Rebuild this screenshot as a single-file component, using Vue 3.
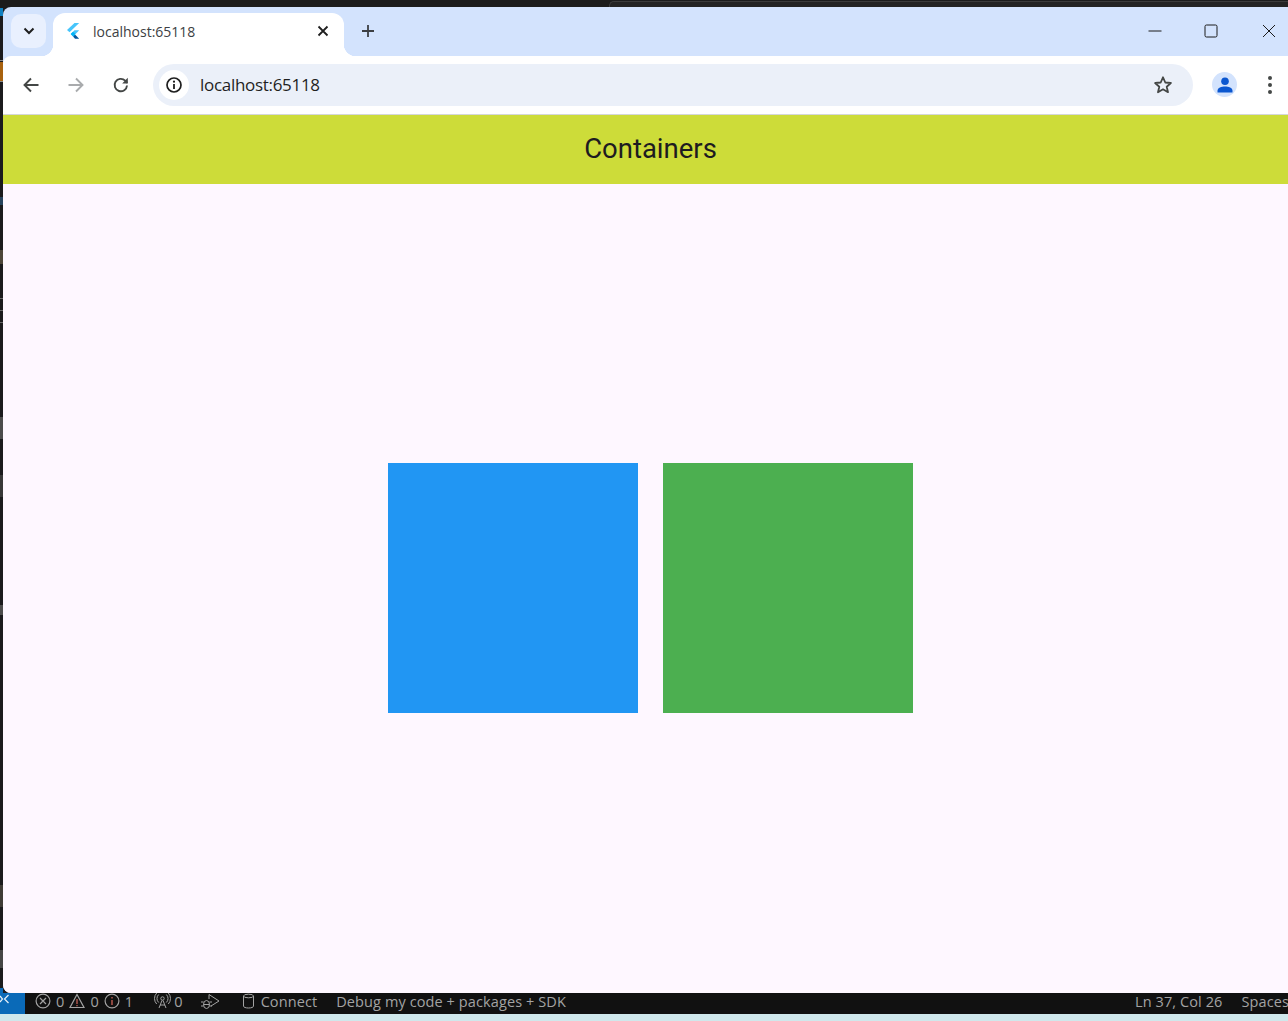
<template>
  <div class="screen">
    <div class="top-strip"><div class="behind-window"></div></div>
    <span
      v-for="mark in edgeMarks"
      :key="mark.y"
      class="edge-mark"
      :style="{ top: mark.y + 'px', height: mark.h + 'px', background: mark.c }"
    ></span>
    <div class="browser">
      <div class="tab-strip">
        <button class="tab-search" aria-label="Search tabs">
          <svg width="12" height="8" viewBox="0 0 12 8"><path d="M1.500 1.500 6 6l4.500-4.500" fill="none" stroke="#1f1f1f" stroke-width="2" /></svg>
        </button>
        <div class="tab">
          <svg class="favicon" width="14" height="16" viewBox="0 0 14 16">
            <path d="M8.500 0h4.700L3.500 9.300 1 7z" fill="#47c5fb" />
            <path d="M13.200 7.300H8.500L4.700 11l2.400 2.400z" fill="#47c5fb" />
            <path d="M7.100 13.400 9 15.700h4.200l-4.200-4.300z" fill="#00569e" />
            <path d="M4.700 11l2.300-2.300 2.400 2.300-2.300 2.400z" fill="#00b5f8" />
          </svg>
          <span class="tab-title">localhost:65118</span>
          <svg class="tab-close" width="12" height="12" viewBox="0 0 12 12"><path d="M1.500 1.500l9 9M10.500 1.500l-9 9" stroke="#1f1f1f" stroke-width="1.800" /></svg>
        </div>
        <svg class="new-tab" width="14" height="14" viewBox="0 0 14 14"><path d="M7 1v12M1 7h12" stroke="#3c3f43" stroke-width="1.800" /></svg>
        <div class="win-controls">
          <svg width="14" height="14" viewBox="0 0 14 14"><path d="M.5 7h13" stroke="#1b1b1b" stroke-width="1" /></svg>
          <svg width="14" height="14" viewBox="0 0 14 14"><rect x="1" y="1" width="12" height="12" rx="1.500" fill="none" stroke="#1b1b1b" stroke-width="1" /></svg>
          <svg class="win-close" width="14" height="14" viewBox="0 0 14 14"><path d="M1 1l12 12M13 1 1 13" stroke="#1b1b1b" stroke-width="1" /></svg>
        </div>
      </div>

      <div class="toolbar">
        <svg class="nav-icon" width="18" height="18" viewBox="0 0 18 18"><path d="M16.500 9H2.500M9 2.500 2.500 9 9 15.500" fill="none" stroke="#444746" stroke-width="1.900" /></svg>
        <svg class="nav-icon" width="18" height="18" viewBox="0 0 18 18"><path d="M1.500 9h14M9 2.500 15.500 9 9 15.500" fill="none" stroke="#a9abad" stroke-width="1.900" /></svg>
        <svg class="nav-icon" width="18" height="18" viewBox="0 0 18 18"><path d="M15 9.500A6.200 6.200 0 1 1 13.200 4.700L15.200 6.800" fill="none" stroke="#444746" stroke-width="1.900" /><path d="M15.800 1.800v5.600h-5.600z" fill="#444746" /></svg>
        <div class="omnibox">
          <span class="site-info">
            <svg width="18" height="18" viewBox="0 0 18 18"><circle cx="9" cy="9" r="7" fill="none" stroke="#1f1f1f" stroke-width="1.700" /><path d="M9 8v5" stroke="#1f1f1f" stroke-width="1.800" /><circle cx="9" cy="5.700" r="1.100" fill="#1f1f1f" /></svg>
          </span>
          <span class="url">localhost:65118</span>
          <svg class="star" width="20" height="20" viewBox="0 0 20 20"><path d="M10 2.300l2.300 5.200 5.600.5-4.200 3.700 1.300 5.500L10 14.300l-5 2.900 1.300-5.500L2.100 8l5.600-.5z" fill="none" stroke="#444746" stroke-width="1.800" stroke-linejoin="round" /></svg>
        </div>
        <span class="avatar">
          <svg width="16" height="16" viewBox="0 0 16 16"><circle cx="8" cy="4.300" r="3.800" fill="#0b57d0" /><path d="M.5 15.500v-1.800C.5 11 4.500 9.600 8 9.600s7.500 1.400 7.500 4.100v1.800z" fill="#0b57d0" /></svg>
        </span>
        <span class="menu-dots"><i></i><i></i><i></i></span>
      </div>

      <main class="page">
        <header class="app-bar">Containers</header>
        <div class="page-body">
          <div class="box box-blue"></div>
          <div class="box box-green"></div>
        </div>
      </main>
    </div>

    <footer class="status-bar">
      <span class="remote">
        <svg width="10" height="10" viewBox="0 0 10 10"><path d="M8.500 1 4.500 5l4 4M0 2l2.500 3L0 8" fill="none" stroke="#e8f1f8" stroke-width="1.200" /></svg>
      </span>
      <div class="status-item problems">
        <svg width="16" height="16" viewBox="0 0 16 16"><circle cx="8" cy="8" r="6.900" fill="none" stroke="#a3a3a3" stroke-width="1.200" /><path d="M5 5l6 6M11 5l-6 6" stroke="#a3a3a3" stroke-width="1.200" /></svg>
        <span>0</span>
        <svg width="16" height="16" viewBox="0 0 16 16"><path d="M8 1.500 15 14.500H1z" fill="none" stroke="#a3a3a3" stroke-width="1.200" /><path d="M8 6v5" stroke="#b65a4f" stroke-width="1.400" /><path d="M8 12v1.300" stroke="#b65a4f" stroke-width="1.400" /></svg>
        <span>0</span>
        <svg width="16" height="16" viewBox="0 0 16 16"><circle cx="8" cy="8" r="6.900" fill="none" stroke="#a3a3a3" stroke-width="1.200" /><path d="M8 7v5" stroke="#b65a4f" stroke-width="1.500" /><path d="M8 4v1.500" stroke="#b65a4f" stroke-width="1.500" /></svg>
        <span>1</span>
      </div>
      <div class="status-item ports">
        <svg width="17" height="16" viewBox="0 0 17 16"><circle cx="8.500" cy="5.500" r="1.700" fill="none" stroke="#a3a3a3" /><path d="M8 7.500 5 15M9 7.500l3 7.500M6 12h5M4.700 9.500a5.500 5.500 0 0 1 0-8M12.300 1.500a5.500 5.500 0 0 1 0 8M2.700 11a8 8 0 0 1 0-11M14.300 0a8 8 0 0 1 0 11" fill="none" stroke="#a3a3a3" /></svg>
        <span>0</span>
      </div>
      <div class="status-item run">
        <svg width="19" height="17" viewBox="0 0 19 17"><path d="M8 1.500 18 8l-8 5M8 1.500V6" fill="none" stroke="#a3a3a3" /><ellipse cx="5.500" cy="11.500" rx="3" ry="4" fill="none" stroke="#a3a3a3" /><path d="M0 9h2.500M0 13h2.500M8.500 9H11M8.500 13H11M2.500 11.500h6" stroke="#a3a3a3" /></svg>
      </div>
      <div class="status-item connect">
        <svg width="13" height="16" viewBox="0 0 13 16"><ellipse cx="6.500" cy="3" rx="5" ry="1.800" fill="none" stroke="#a3a3a3" /><path d="M1.500 3v10.200c0 1 2.200 1.800 5 1.800s5-.8 5-1.800V3" fill="none" stroke="#a3a3a3" /></svg>
        <span>Connect</span>
      </div>
      <span class="status-item debug">Debug my code + packages + SDK</span>
      <div class="status-item status-right">
        <span>Ln 37, Col 26</span>
        <span>Spaces</span>
      </div>
    </footer>
    <div class="desktop-strip"></div>
  </div>
</template>

<script setup>
// bits of the desktop that peek out left of the browser window
const edgeMarks = [
  { y: 8, h: 8, c: '#0f7fbf' },
  { y: 60, h: 1, c: '#8a8a8a' },
  { y: 62, h: 19, c: '#a8620f' },
  { y: 81, h: 1, c: '#8a8a8a' },
  { y: 197, h: 8, c: '#27435c' },
  { y: 250, h: 14, c: '#4d4639' },
  { y: 298, h: 1, c: '#666' },
  { y: 310, h: 1, c: '#666' },
  { y: 322, h: 1, c: '#666' },
  { y: 417, h: 22, c: '#4c4c4c' },
  { y: 475, h: 22, c: '#383838' },
  { y: 605, h: 10, c: '#4c4c4c' },
  { y: 885, h: 22, c: '#3f3c36' },
  { y: 950, h: 18, c: '#464646' },
  { y: 988, h: 5, c: '#0a6ab8' }
]
</script>

<style>
html,
body {
  margin: 0;
  overflow: hidden;
}
</style>

<style scoped>
.screen {
  position: relative;
  display: flex;
  flex-direction: column;
  width: 1288px;
  height: 1021px;
  overflow: hidden;
  background: #1b1b1d;
}

.top-strip {
  display: flex;
  flex: none;
  height: 7px;
  box-sizing: border-box;
  padding: 1px 0 0 609px;
  background: #1c1c1c;
}

.behind-window {
  flex: 1;
  border: solid #3b3b3b;
  border-width: 1px 0 0 1px;
  border-top-left-radius: 5px;
  background: #232323;
}

.edge-mark {
  position: absolute;
  left: 0;
  width: 3px;
}

.browser {
  position: relative;
  display: flex;
  flex-direction: column;
  flex: none;
  width: 1295px;
  height: 986px;
  margin-left: 3px;
  overflow: hidden;
  border-radius: 8px 0 0 8px;
  background: #d3e3fd;
}

.tab-strip {
  display: flex;
  align-items: flex-end;
  flex: none;
  height: 49px;
  box-sizing: border-box;
  padding-left: 8px;
}

.tab-search {
  display: flex;
  align-items: center;
  justify-content: center;
  align-self: flex-start;
  width: 35px;
  height: 34px;
  margin-top: 7px;
  padding: 0;
  border: 0;
  border-radius: 10px;
  background: #e9f0fe;
}

.tab {
  position: relative;
  display: flex;
  align-items: center;
  width: 291px;
  height: 43px;
  margin-left: 7px;
  padding: 0 15px 7px 13px;
  box-sizing: border-box;
  border-radius: 12px 12px 0 0;
  background: #fff;
}

.tab::before,
.tab::after {
  content: "";
  position: absolute;
  bottom: 0;
  width: 12px;
  height: 12px;
}

.tab::before {
  left: -12px;
  background: radial-gradient(circle at 0 0, transparent 12px, #fff 12.500px);
}

.tab::after {
  right: -12px;
  background: radial-gradient(circle at 100% 0, transparent 12px, #fff 12.500px);
}

.favicon {
  flex: none;
}

.tab-title {
  flex: 1;
  margin-left: 13px;
  font: 14px "Open Sans", sans-serif;
  color: #3c4043;
}

.tab-close {
  flex: none;
}

.new-tab {
  align-self: flex-start;
  margin: 17px 0 0 17px;
}

.win-controls {
  display: flex;
  align-self: flex-start;
  gap: 42px;
  margin: 17px 22px 0 auto;
}

.win-close {
  margin-left: 2px;
}

.toolbar {
  position: relative;
  display: flex;
  align-items: center;
  flex: none;
  height: 59px;
  box-sizing: border-box;
  padding: 0 14px 1px 19px;
  border-bottom: 1px solid #d5d7da;
  border-top-left-radius: 8px;
  background: #fff;
}

.nav-icon {
  flex: none;
  margin-right: 27px;
}

.nav-icon:nth-child(3) {
  margin-right: 23px;
}

.omnibox {
  display: flex;
  align-items: center;
  flex: none;
  width: 1040px;
  height: 42px;
  box-sizing: border-box;
  padding: 0 20px 0 6px;
  border-radius: 21px;
  background: #ebf0f9;
}

.site-info {
  display: flex;
  align-items: center;
  justify-content: center;
  flex: none;
  width: 30px;
  height: 30px;
  border-radius: 50%;
  background: #fff;
}

.url {
  flex: 1;
  margin-left: 11px;
  font: 17px "Open Sans", sans-serif;
  letter-spacing: -0.3px;
  color: #1f1f1f;
}

.star {
  flex: none;
}

.avatar {
  display: flex;
  align-items: center;
  justify-content: center;
  flex: none;
  width: 25px;
  height: 25px;
  margin-left: 19px;
  border-radius: 50%;
  background: #d3e3fd;
}

.menu-dots {
  display: flex;
  flex-direction: column;
  flex: none;
  gap: 3px;
  margin-left: 31px;
}

.menu-dots i {
  width: 4px;
  height: 4px;
  border-radius: 50%;
  background: #444746;
}

.page {
  display: flex;
  flex-direction: column;
  flex: 1;
  min-height: 0;
  background: #fef7ff;
}

.app-bar {
  flex: none;
  height: 69px;
  text-align: center;
  font: 27.500px/67px Roboto, sans-serif;
  color: #1d1b20;
  background: #cddc39;
}

.page-body {
  display: flex;
  align-items: center;
  justify-content: center;
  flex: 1;
  gap: 25px;
  padding-bottom: 1px;
}

.box {
  width: 250px;
  height: 250px;
}

.box-blue {
  background: #2196f3;
}

.box-green {
  background: #4caf50;
}

.status-bar {
  display: flex;
  align-items: center;
  flex: none;
  height: 21px;
  font: 14.500px "Open Sans", sans-serif;
  letter-spacing: 0.1px;
  color: #a3a3a3;
  background: #111;
  white-space: nowrap;
}

.remote {
  display: flex;
  align-items: center;
  flex: none;
  width: 25px;
  height: 21px;
  padding-bottom: 9px;
  box-sizing: border-box;
  background: #0a6ab8;
}

.status-item {
  display: flex;
  align-items: center;
  flex: none;
  height: 16px;
  margin-bottom: 5px;
}

.problems {
  gap: 5px;
  margin-left: 10px;
}

.ports {
  gap: 3px;
  margin-left: 21px;
}

.run {
  margin-left: 18px;
}

.connect {
  gap: 6px;
  margin-left: 22px;
}

.debug {
  margin-left: 19px;
}

.status-right {
  gap: 19px;
  margin-left: auto;
  margin-right: -1px;
}

.desktop-strip {
  flex: 1;
  background: #cfe8ec;
}
</style>
